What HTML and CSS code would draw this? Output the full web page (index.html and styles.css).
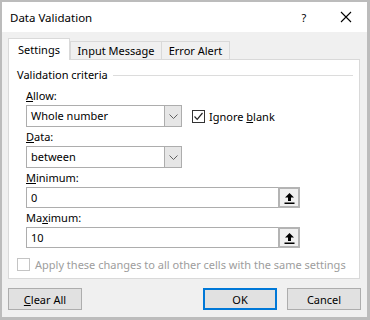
FILE: index.html
```html
<!DOCTYPE html>
<html lang="en">
<head>
    <meta charset="UTF-8">
    <title>Data Validation</title>
    <link rel="stylesheet" href="styles.css">
</head>
<body>
    <div class="dialog">
        <div class="titlebar">
            <span class="title">Data Validation</span>
            <span class="help">?</span>
            <span class="close">
                <svg width="12" height="12" viewBox="0 0 12 12"><path d="M1 1 L11 11 M11 1 L1 11" stroke="#000" stroke-width="1.1" fill="none"/></svg>
            </span>
        </div>

        <div class="content">
            <div class="tabs">
                <div class="tab active">Settings</div>
                <div class="tab input-tab">Input Message</div>
                <div class="tab error-tab">Error Alert</div>
            </div>

            <div class="panel">
                <div class="group-title">
                    <span>Validation criteria</span>
                    <span class="rule"></span>
                </div>

                <div class="field-label"><u>A</u>llow:</div>
                <div class="row">
                    <div class="select">
                        <span class="value">Whole number</span>
                        <span class="drop">
                            <svg width="9" height="5" viewBox="0 0 9 5"><path d="M0.5 0.5 L4.5 4.5 L8.5 0.5" stroke="#606060" stroke-width="1" fill="none"/></svg>
                        </span>
                    </div>
                    <div class="check">
                        <span class="box checked">
                            <svg width="11" height="11" viewBox="0 0 11 11"><path d="M1.5 5.5 L4.2 8.3 L9.5 2" stroke="#222" stroke-width="1.2" fill="none"/></svg>
                        </span>
                        <span>Ignore <u>b</u>lank</span>
                    </div>
                </div>

                <div class="field-label"><u>D</u>ata:</div>
                <div class="select">
                    <span class="value">between</span>
                    <span class="drop">
                        <svg width="9" height="5" viewBox="0 0 9 5"><path d="M0.5 0.5 L4.5 4.5 L8.5 0.5" stroke="#606060" stroke-width="1" fill="none"/></svg>
                    </span>
                </div>

                <div class="field-label"><u>M</u>inimum:</div>
                <div class="input">
                    <span class="value">0</span>
                    <span class="spin">
                        <svg width="11" height="12" viewBox="0 0 11 12"><path d="M5.5 1 L10 5.5 L7 5.5 L7 9 L4 9 L4 5.5 L1 5.5 Z M0.5 10.5 L10.5 10.5 L10.5 12 L0.5 12 Z" fill="#000"/></svg>
                    </span>
                </div>

                <div class="field-label">Ma<u>x</u>imum:</div>
                <div class="input">
                    <span class="value">10</span>
                    <span class="spin">
                        <svg width="11" height="12" viewBox="0 0 11 12"><path d="M5.5 1 L10 5.5 L7 5.5 L7 9 L4 9 L4 5.5 L1 5.5 Z M0.5 10.5 L10.5 10.5 L10.5 12 L0.5 12 Z" fill="#000"/></svg>
                    </span>
                </div>

                <div class="check apply">
                    <span class="box disabled"></span>
                    <span>Apply these changes to all other cells with the same settings</span>
                </div>
            </div>

            <div class="buttons">
                <button class="btn"><u>C</u>lear All</button>
                <span class="spacer"></span>
                <button class="btn default">OK</button>
                <button class="btn">Cancel</button>
            </div>
        </div>
    </div>
</body>
</html>
```

FILE: styles.css
```css
body, html {
    margin: 0;
    padding: 0;
    background: #fff;
    font-family: "Noto Sans", "Open Sans", Arial, sans-serif;
    font-size: 11px;
    color: #000;
}

.dialog {
    width: 370px;
    height: 320px;
    box-sizing: border-box;
    border: 2px solid #bcbcbc;
    border-right-width: 3px;
    border-bottom-width: 3px;
    background: #f0f0f0;
    display: flex;
    flex-direction: column;
}

/* Title bar */
.titlebar {
    height: 30px;
    background: #fff;
    display: flex;
    align-items: center;
    padding: 0 0 0 8px;
}

    .titlebar .title {
        flex: 1;
        font-size: 11.5px;
    }

    .titlebar .help {
        width: 20px;
        margin-right: 26px;
        text-align: center;
    }

    .titlebar .close {
        width: 12px;
        height: 12px;
        margin-right: 15px;
        display: flex;
    }

.content {
    flex: 1;
    padding: 6px 6px 7px 6px;
    display: flex;
    flex-direction: column;
}

/* Tabs */
.tabs {
    display: flex;
    align-items: flex-end;
    height: 21px;
}

.tab {
    height: 18px;
    box-sizing: border-box;
    border: 1px solid #d9d9d9;
    border-bottom: none;
    line-height: 17px;
    text-align: center;
    background: #f0f0f0;
}

    .tab.active {
        width: 62px;
        height: 22px;
        margin-bottom: -1px;
        background: #fff;
        line-height: 21px;
        position: relative;
        z-index: 1;
    }

    .tab.input-tab {
        width: 92px;
    }

    .tab.error-tab {
        width: 68px;
        border-left: none;
    }

/* Panel */
.panel {
    height: 220px;
    box-sizing: border-box;
    margin-right: 1px;
    background: #fff;
    border: 1px solid #d9d9d9;
    padding: 7px 6px 0 8px;
}

.group-title {
    display: flex;
    align-items: center;
    height: 16px;
    line-height: 16px;
}

    .group-title .rule {
        flex: 1;
        height: 1px;
        background: #dcdcdc;
        margin-left: 5px;
    }

.field-label {
    height: 19px;
    line-height: 19px;
    margin-left: 9px;
}

.group-title + .field-label {
    margin-top: 3px;
}

.row {
    display: flex;
    align-items: center;
}

.select {
    width: 156px;
    height: 22px;
    box-sizing: border-box;
    border: 1px solid #adadad;
    margin-left: 9px;
    display: flex;
    align-items: stretch;
}

    .select .value, .input .value {
        flex: 1;
        line-height: 20px;
        padding-left: 4px;
    }

    .select .drop {
        width: 16px;
        border-left: 1px solid #adadad;
        background: #e6e6e6;
        display: flex;
        align-items: center;
        justify-content: center;
    }

.input {
    width: 274px;
    height: 21px;
    box-sizing: border-box;
    border: 1px solid #adadad;
    border-right: none;
    margin-left: 9px;
    display: flex;
    align-items: stretch;
}

    .input .value {
        line-height: 19px;
    }

    .input .spin {
        width: 22px;
        margin-top: -1px;
        margin-bottom: -1px;
        box-sizing: border-box;
        border: 2px solid #b4b4b4;
        background: #f0f0f0;
        display: flex;
        align-items: center;
        justify-content: center;
    }

/* Checkboxes */
.check {
    display: flex;
    align-items: center;
    margin-left: 10px;
}

    .check .box {
        width: 13px;
        height: 13px;
        box-sizing: border-box;
        border: 1px solid #333;
        display: flex;
        align-items: center;
        justify-content: center;
        margin-right: 4px;
    }

    .check .box.disabled {
        border-color: #c4c4c4;
        margin-right: 5px;
    }

.apply {
    margin-top: 9px;
    margin-left: 0;
    color: #9d9d9d;
    white-space: nowrap;
}

/* Buttons */
.buttons {
    display: flex;
    margin-top: 9px;
}

    .buttons .spacer {
        flex: 1;
    }

.btn {
    width: 74px;
    height: 22px;
    box-sizing: border-box;
    border: 1px solid #adadad;
    background: #e1e1e1;
    font-family: inherit;
    font-size: 11px;
    color: #000;
    padding: 0;
}

    .btn.default {
        border: 2px solid #0078d7;
        margin-right: 10px;
    }
```
